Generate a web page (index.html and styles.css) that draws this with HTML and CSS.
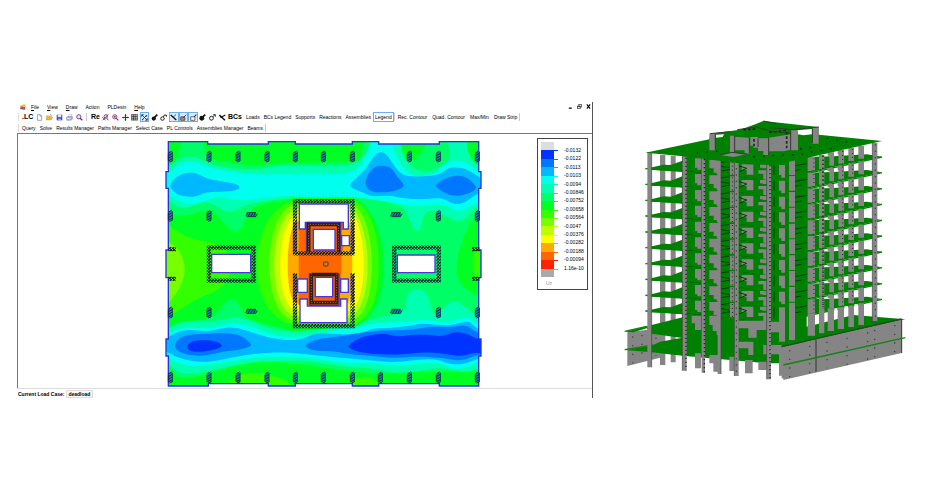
FILE: index.html
```html
<!DOCTYPE html>
<html lang="en">
<head>
<meta charset="utf-8">
<title>PLDesin</title>
<link rel="stylesheet" href="styles.css">
</head>
<body>
<main class="page">
<section class="app">
  <header class="menubar">
    <svg class="appicon" viewBox="0 0 16 16"><rect x="1" y="4" width="8" height="8" fill="#e8862a"/><rect x="7" y="1" width="8" height="7" fill="#f6c342"/><rect x="6" y="8" width="8" height="7" fill="#d64a2a"/><rect x="1" y="9" width="6" height="5" fill="#3b62c4"/></svg>
    <nav class="menu">
      <button><u>F</u>ile</button><button><u>V</u>iew</button><button><u>D</u>raw</button><button>Action</button><button>PLDesin</button><button><u>H</u>elp</button>
    </nav>
    <div class="winctl">
      <button aria-label="Minimize"><svg viewBox="0 0 12 12"><path d="M2 10H9" stroke="#000" stroke-width="3"/></svg></button>
      <button aria-label="Restore"><svg viewBox="0 0 12 12"><path d="M4 4V1H11V7H8M1 5H8V11H1ZM1 6H8" fill="none" stroke="#111" stroke-width="1.6"/></svg></button>
      <button aria-label="Close"><svg viewBox="0 0 12 12"><path d="M2 1L10 11M10 1L2 11" stroke="#000" stroke-width="2.6"/></svg></button>
    </div>
  </header>

  <div class="toolbar">
    <i class="grip"></i>
    <button class="word lc">.LC</button>
    <div class="icons files">
      <button aria-label="New"><svg viewBox="0 0 20 20"><path d="M4 2H12L16 6V18H4Z" fill="#fff" stroke="#6b83b5" stroke-width="2"/><path d="M12 2V6H16" fill="none" stroke="#6b83b5" stroke-width="2"/></svg></button>
      <button aria-label="Open"><svg viewBox="0 0 20 20"><path d="M1 17V5H7L9 7H15V10" fill="#f7cf5b" stroke="#c9962c" stroke-width="1.5"/><path d="M1 17L5 9H19L15 17Z" fill="#f0b93a" stroke="#b98420"/><path d="M11 3Q15 0 17 5" fill="none" stroke="#4a72b8" stroke-width="2"/></svg></button>
      <button aria-label="Save"><svg viewBox="0 0 20 20"><path d="M2 2H18V18H2Z" fill="#3b46c8"/><path d="M5 2H15V9H5Z" fill="#e9edff"/><path d="M6 13H14V18H6Z" fill="#aab4ef"/></svg></button>
      <button aria-label="Print"><svg viewBox="0 0 20 20"><path d="M6 9L9 1H17L14 9Z" fill="#fff" stroke="#7087b4"/><path d="M1 10L5 7H18L19 14L14 18H2Z" fill="#9fb2d6" stroke="#566c9c"/><path d="M3 13H14" stroke="#fff" stroke-width="2"/></svg></button>
      <button aria-label="Preview"><svg viewBox="0 0 20 20"><circle cx="8" cy="8" r="6" fill="#f3e6f5" stroke="#7a2d84" stroke-width="2.6"/><path d="M12 12L18 18" stroke="#7a2d84" stroke-width="4"/></svg></button>
    </div>
    <i class="sep"></i>
    <button class="word re">Re</button>
    <div class="icons views">
      <button aria-label="Zoom window"><svg viewBox="0 0 20 20"><circle cx="11" cy="7" r="5" fill="none" stroke="#71305e" stroke-width="2.5"/><path d="M2 18L18 1M14 12L18 18M1 9L10 18" stroke="#71305e" stroke-width="2.5"/></svg></button>
      <button aria-label="Zoom in"><svg viewBox="0 0 20 20"><circle cx="8" cy="8" r="6" fill="none" stroke="#8b2f7b" stroke-width="2.6"/><path d="M12 12L18 18M5 8H11M8 5V11" stroke="#8b2f7b" stroke-width="3"/></svg></button>
      <button aria-label="Pan"><svg viewBox="0 0 20 20"><path d="M10 2V18M2 10H18" stroke="#222" stroke-width="2.5"/><path d="M10 0L13 4H7ZM10 20L13 16H7ZM0 10L4 7V13ZM20 10L16 7V13Z" fill="#222"/></svg></button>
      <button aria-label="Grid"><svg viewBox="0 0 20 20"><path d="M1 2H19M1 7H19M1 12H19M1 17H19M2 1V18M7 1V18M12 1V18M18 1V18" stroke="#222" stroke-width="2"/></svg></button>
      <button class="on" aria-label="Snap"><svg viewBox="0 0 20 20"><path d="M3 3L17 17M17 3L3 17M2 2H8M2 2V8M18 18H12M18 18V12M12 6H18M5 14V18" stroke="#222" stroke-width="2.2"/></svg></button>
      <button aria-label="Fill node"><svg viewBox="0 0 20 20"><circle cx="8" cy="13" r="6" fill="#111"/><path d="M10 10L18 2" stroke="#111" stroke-width="5"/></svg></button>
      <button aria-label="Open node"><svg viewBox="0 0 20 20"><circle cx="7" cy="13" r="5" fill="none" stroke="#111" stroke-width="2.6"/><path d="M10 8L12 3H18M18 3V8" fill="none" stroke="#111" stroke-width="2.6"/></svg></button>
      <button class="on" aria-label="Line"><svg viewBox="0 0 20 20"><path d="M2 3L18 17" stroke="#111" stroke-width="4"/><path d="M9 9L17 2" stroke="#111" stroke-width="2"/></svg></button>
      <button class="on" aria-label="Hatch area"><svg viewBox="0 0 20 20"><path d="M2 8H14V18H2Z" fill="#9a9a9a" stroke="#333" stroke-width="2"/><path d="M8 12L18 2" stroke="#333" stroke-width="2.6"/></svg></button>
      <button class="on" aria-label="Area"><svg viewBox="0 0 20 20"><path d="M2 8H14V18H2Z" fill="#fff" stroke="#333" stroke-width="2"/><path d="M12 8L18 2" stroke="#333" stroke-width="3"/></svg></button>
      <button aria-label="Solid load"><svg viewBox="0 0 20 20"><circle cx="8" cy="12" r="7" fill="#111"/><path d="M11 8L18 2" stroke="#111" stroke-width="5"/></svg></button>
      <button aria-label="Open load"><svg viewBox="0 0 20 20"><circle cx="7" cy="12" r="5.5" fill="none" stroke="#111" stroke-width="2.6"/><path d="M11 8L17 2M12 2H18V8" fill="none" stroke="#111" stroke-width="2.4"/></svg></button>
      <button aria-label="Strip"><svg viewBox="0 0 20 20"><path d="M1 3L17 18" stroke="#111" stroke-width="4"/><path d="M5 10L18 3M3 8L10 9" stroke="#111" stroke-width="3.4"/></svg></button>
    </div>
    <button class="word">BCs</button>
    <div class="texts">
      <button>Loads</button><button>BCs Legend</button><button>Supports</button><button>Reactions</button><button>Assemblies</button><button class="on">Legend</button>
    </div>
    <i class="sep"></i>
    <div class="texts wide">
      <button>Rec. Contour</button><button>Quad. Contour</button><button>Max/Min</button><button>Draw Strip</button>
    </div>
    <i class="sep"></i>
  </div>

  <div class="toolbar second">
    <i class="grip"></i>
    <div class="texts">
      <button>Query</button><button>Solve</button><button>Results Manager</button><button>Paths Manager</button><button>Select Case</button><button>PL Controls</button><button>Assemblies Manager</button><button>Beams</button>
    </div>
    <i class="sep"></i>
  </div>

  <div class="canvas">
    <svg class="plot" viewBox="-426 -3 1557 762" role="img" aria-label="Slab displacement contours">
      <defs>
        <path id="slab" d="M25 20H143V27H325V20H406V27H577V20H656V27H838V20H956V110H963V160H956V345H963V428H956V612H963V663H956V753H838V746H656V753H577V746H406V753H325V746H145V753H25V663H18V612H25V428H18V345H25V160H18V110H25Z"/>
        <clipPath id="slabclip"><use href="#slab"/></clipPath>
        <pattern id="hatch" width="9" height="9" patternUnits="userSpaceOnUse"><path d="M-2 11L11-2" stroke="#06141c" stroke-width="4.4"/></pattern>
        <g id="colv"><path d="M-4-14H4V14H-4Z" fill="#1583b8"/><path d="M-6-10L4-16M-6-2L6-9M-6 6L6-1M-6 14L6 7M-3 17L6 14M-6-8V14M6-14V14" stroke="#102038" stroke-width="2.6"/></g>
        <g id="colh"><path d="M-15-4H15V4H-15Z" fill="#1583b8"/><path d="M-17 5L-11-5M-10 6L-3-6M-2 6L5-6M6 6L12-6M14 5L18-3M-14-6H14M-14 6H14" stroke="#102038" stroke-width="2.6"/></g>
        <g id="colrow"><use href="#colv" x="31"/><use href="#colv" x="147"/><use href="#colv" x="234"/><use href="#colv" x="321"/><use href="#colv" x="406"/><use href="#colv" x="490"/><use href="#colv" x="577"/><use href="#colv" x="748"/><use href="#colv" x="835"/><use href="#colv" x="952"/></g>
        <g id="colmid"><use href="#colv" x="31"/><use href="#colv" x="147"/><use href="#colh" x="274" y="-3"/><use href="#colh" x="708" y="-3"/><use href="#colv" x="835"/><use href="#colv" x="952"/></g>
        <path id="supports" d="M147 338H281V437H147ZM703 338H836V437H703ZM400 199H583M400 355H583M400 573H583M405 195V359M578 195V359M405 415V580M578 415V580"/>
      </defs>
      <g clip-path="url(#slabclip)">
        <use href="#slab" fill="#00ff22"/>
        <path fill="#33ff00" d="M25 268C60 300 90 312 140 320S210 340 212 390S180 465 140 480S70 520 25 545Z"/>
        <path fill="#77ff00" d="M15 318C55 330 75 370 74 405S55 470 25 505H15Z"/>
        <path fill="#00ff66" d="M25 105C50 75 62 50 65 15H130C135 50 145 75 175 78S260 95 320 88S430 85 510 82S590 90 602 60L612 15H960V230C925 265 895 330 890 390S920 460 960 490V690C880 725 800 705 740 712S600 715 510 700S370 680 300 682S170 715 100 725S50 710 25 695V580C60 550 120 560 150 548S190 495 215 493S245 540 265 550S360 580 410 590C560 590 670 520 670 390S610 220 580 190H400C340 200 290 205 270 230S250 290 226 290S180 235 150 228S60 260 25 232Z"/>
        <path fill="#00ff22" d="M728 15C722 50 728 80 750 78S790 50 805 15ZM925 15C918 50 930 80 960 92V15Z"/>
        <path fill="#33ff00" d="M963 315C935 345 925 410 963 450ZM200 753C215 715 290 705 330 720S380 730 395 753ZM560 753C585 720 640 715 660 753Z"/>
        <path fill="#00ffb0" d="M15 100C50 80 60 66 90 65S130 80 160 90S270 108 320 98S440 95 510 94S590 85 610 65S625 40 630 15H722C722 50 735 85 770 103S830 100 855 85S862 45 866 15H920C920 50 930 80 965 100V208C930 225 920 258 895 258S840 225 810 228S790 288 773 288S745 225 720 213S640 195 580 188L400 190C340 195 270 200 235 222S180 215 150 205S90 222 70 220S40 205 15 192Z"/>
        <path fill="#00ffb0" d="M737 525C737 480 745 462 772 462S808 490 815 540Z"/>
        <path fill="#00ffee" d="M15 120C50 100 60 80 90 80S130 92 160 100S270 120 330 118H530C590 115 600 95 612 70L636 15H695C700 60 725 90 745 112S820 125 840 100S880 75 900 77S935 95 965 118V198C940 205 915 230 895 228S860 205 830 208S760 215 700 203S580 182 510 185S400 180 340 185S270 198 230 194S180 182 150 192S110 210 85 206S40 190 15 170Z"/>
        <path fill="#00b8ff" d="M30 152C40 125 70 112 95 113S130 130 165 136S238 145 238 157S200 170 160 171S120 186 92 185S40 178 30 152ZM570 150C585 130 610 115 625 90S650 52 663 52S685 65 698 85S725 123 750 124S830 125 850 110S880 98 897 98S935 110 963 130V172C940 180 920 207 893 207S860 188 830 190S750 195 710 186S640 190 620 178S575 165 570 150Z"/>
        <path fill="#0077ff" d="M617 140C620 115 640 92 663 92S695 98 705 115S728 140 731 150S700 172 663 172S617 160 617 140ZM827 152C840 135 870 122 895 122S935 138 946 152S915 182 890 182S840 168 827 152Z"/>
        <path fill="#00ffb0" d="M15 590C50 560 80 558 110 560S160 560 210 550S300 575 340 583S450 590 510 580S620 560 650 550S720 545 733 525S742 464 772 462S808 500 815 525S850 520 860 510S880 500 890 500S930 530 963 550V700C900 725 870 695 830 700S740 720 680 708S570 700 510 688S370 675 300 680S170 705 110 714S45 705 15 675Z"/>
        <path fill="#00ffee" d="M15 600C50 580 80 572 110 578S160 574 210 566S300 590 340 600S450 605 510 590S620 568 660 565S750 560 780 555S850 568 895 553S930 560 963 572V678C920 700 890 710 850 690S740 700 680 690S570 690 510 678S400 665 330 666S220 680 170 686S110 698 90 694S40 680 15 665Z"/>
        <path fill="#00b8ff" d="M15 615C50 585 85 582 120 587S160 582 200 578S290 600 340 610S420 615 450 602S510 600 570 597S620 580 660 580S740 575 775 568S850 580 895 565S930 572 963 585V668C920 682 900 698 850 680S740 685 680 680S570 670 510 665S400 650 330 653S210 670 160 678S60 675 15 648Z"/>
        <path fill="#0077ff" d="M45 633C50 600 90 598 125 597S190 592 220 597S265 618 272 627S240 645 210 647S150 662 120 662S48 655 45 633ZM438 632C450 612 490 610 530 605S600 593 650 588S730 590 780 580S860 580 895 573S930 585 963 597V658C930 665 915 680 885 675S790 662 740 667S640 662 600 660S530 648 500 648S440 645 438 632Z"/>
        <path fill="#0033ff" d="M82 635C85 618 110 615 140 616S180 625 185 630S165 645 148 647S85 658 82 635ZM565 635C580 615 610 602 650 598S700 608 730 603S800 598 830 602S870 590 895 592S935 605 963 615V655C930 650 920 665 890 662S830 650 780 653S720 660 670 658S580 650 565 635Z"/>
        <path fill="#00ff22" d="M400 188C340 205 300 300 295 390S340 565 400 578L580 580C650 545 672 480 672 390S640 215 580 188Z"/>
        <path fill="#33ff00" d="M400 198C330 215 290 300 290 390S330 555 400 570H580C640 545 656 480 656 390S635 220 580 195Z"/>
        <path fill="#77ff00" d="M405 205C350 225 328 310 328 390S350 545 405 560H575C620 535 635 480 635 390S615 230 575 205Z"/>
        <path fill="#bbff00" d="M405 220C360 245 343 320 343 390S360 530 405 545H575C610 520 623 460 623 390S605 245 575 220Z"/>
        <path fill="#ffff00" d="M405 237C372 265 360 330 360 390S372 510 405 528H575C602 500 611 450 611 390S600 260 575 230Z"/>
        <path fill="#ffaa00" d="M405 258C390 285 383 340 383 390S390 490 405 505H565C574 470 577 430 577 390S574 290 568 262Z"/>
        <path fill="#ff6600" d="M416 262V510H542C536 465 546 440 544 390S560 340 545 300V262Z"/>
      </g>
      <path d="M440 355V262H550V285H541V355Z" fill="#ff5a00"/>
      <path d="M448 415H537V512H448Z" fill="#ff5a00"/>
      <g fill="none" stroke="#8a62a8" stroke-width="9"><path d="M405 262V352M578 262V352M405 420V500M578 420V500"/></g>
      <g fill="none" stroke="#18b88a" stroke-width="4"><path d="M147 338H281V437H147ZM703 338H836V437H703ZM400 199H583M400 355H583M400 573H583M405 195V250M578 195V250M405 520V580M578 520V580"/></g>
      <use href="#supports" fill="none" stroke="url(#hatch)" stroke-width="13"/>
      <g fill="#fff" stroke="#4a35d8" stroke-width="4">
        <path d="M155 358H272V413H155ZM712 360H825V413H712ZM418 207H565V282H550V262H436V282H418ZM460 283H525V345H460ZM545 302H568V332H545ZM413 432H442V472H413ZM466 427H518V485H466ZM542 432H565V472H542ZM420 492H442V513H542V492H561V563H420Z"/>
        <use href="#slab" fill="none" stroke="#2432e0"/>
      </g>
      <g fill="none" stroke="#2b2018" stroke-width="11"><path d="M446 352V268H536V352"/><path d="M454 415V503H530V415M454 419H535"/></g>
      <g fill="none" stroke="#3d2ba0" stroke-width="3"><path d="M439 352V262H542V352M448 415V511H537V415"/></g>
      <g fill="none" stroke="#ff9a52" stroke-width="2" stroke-dasharray="3 5"><path d="M446 352V268H536V352M454 415V503H530V415"/></g>
      <path d="M491 381H504V393H491Z" fill="#d87828" stroke="#554433" stroke-width="3"/>
      <use href="#colrow" y="64"/><use href="#colmid" y="242"/><use href="#colmid" y="532"/><use href="#colrow" y="727"/><use href="#colv" x="661" y="727"/>
      <path d="M25 343H48M25 431H48M936 343H958M936 431H958" stroke="url(#hatch)" stroke-width="12"/>
      <path d="M25 338H48V348H25ZM25 426H48V436H25ZM936 338H958V348H936ZM936 426H958V436H936Z" fill="url(#hatch)"/>
    </svg>
    <aside class="legend">
      <ul class="scale"><li></li><li></li><li></li><li></li><li></li><li></li><li></li><li></li><li></li><li></li><li></li><li></li><li></li><li></li><li></li><li></li></ul>
      <ul class="values"><li>-0.0132</li><li>-0.0122</li><li>-0.0113</li><li>-0.0103</li><li>-0.0094</li><li>-0.00846</li><li>-0.00752</li><li>-0.00658</li><li>-0.00564</li><li>-0.0047</li><li>-0.00376</li><li>-0.00282</li><li>-0.00188</li><li>-0.00094</li><li>1.16e-10</li></ul>
      <p class="unit">Uz</p>
    </aside>
  </div>

  <footer class="status"><label for="case">Current Load Case:</label><input id="case" value="deadload" readonly></footer>
</section>

<svg class="building" viewBox="0 0 870 810" role="img" aria-label="3D model of the building">
  <defs>
    <g id="storey">
      <path fill="#008000" d="M76 160L100 156L130 149L152 150L187 137V169L95 165ZM786 125L740 118L640 124L555 126V176L650 154Z"/>
      <path fill="#858585" d="M225 130H243V164H232V158H225ZM268 134H303V185H290V173H281V160H268ZM330 137H343V180H330ZM365 148H400V179H380V165H365ZM415 166H440V195H430V176H415ZM420 148H440V160H428V158H420ZM477 150H495V188H484V180H477ZM507 136H525V180H507ZM563 126H585V166H575V168H563ZM597 120H613V162H597ZM623 112H642V152H628V122H623ZM653 105H672V146H655V118H653ZM685 98H702V138H685ZM715 92H732V131H715Z"/>
      <path fill="none" stroke="#013c01" stroke-width="3" d="M303 142L328 138M303 154L328 158M305 168L330 163M355 152L380 160L358 170M462 150V180M526 152L560 146M526 166L545 163M200 169L245 174M304 181L330 184M355 186L415 194"/>
      <path fill="none" stroke="#008000" stroke-width="4" d="M76 161L187 169L300 181L440 196L500 190L560 176L786 126"/>
      <path fill="none" stroke="#222" stroke-width="3" stroke-dasharray="3 9" d="M198 130V170M253 134V174M337 140V180M582 130V165M609 122V160M668 108V146M698 102V138"/>
    </g>
  </defs>
  <path fill="#858585" d="M22 652L120 640V728L22 753Z"/>
  <path fill="#858585" d="M120 120H136V750H120ZM152 122H167V742H152Z"/>
  <path fill="#008000" d="M187 120H560V690L485 700V745H440L187 722ZM14 650L215 600V672L187 669L95 656L80 640L40 652ZM14 705L95 692L120 680L187 668V722L95 712ZM485 697L560 635L700 600L856 613Z"/>
  <path fill="#858585" d="M225 715H243V760H225ZM268 720H303V770H280V745H268ZM328 725H343V768H328ZM375 735H398V775H375ZM415 740H440V765H415ZM430 690H485V718H430ZM477 710H495V790H485V782H477Z"/>
  <use href="#storey"/><use href="#storey" y="47"/><use href="#storey" y="95"/><use href="#storey" y="142"/><use href="#storey" y="190"/><use href="#storey" y="237"/><use href="#storey" y="285"/><use href="#storey" y="332"/><use href="#storey" y="380"/><use href="#storey" y="427"/>
  <path fill="#858585" d="M215 602H243V645H225V625H215ZM268 602H303V660H290V648H278V630H268ZM355 617H440V645H410V668H385V640H355ZM355 680H400V720H385V700H355ZM477 600H495V680H477ZM452 620H477V652H452ZM507 590H525V675H507ZM563 595H585V662H563ZM597 585H613V655H597ZM623 580H642V648H623ZM653 577H672V642H653ZM685 572H702V636H685ZM715 565H732V630H715Z"/>
  <path fill="#fff" d="M643 580H652V600H643ZM673 574H684V602H673ZM703 568H714V600H703Z"/>
  <path fill="#858585" d="M485 697L845 614V714L490 795Z"/>
  <path fill="none" stroke="#234a23" stroke-width="4" d="M485 695L845 612"/>
  <path fill="none" stroke="#333" stroke-width="3" d="M588 673V770M845 614V714"/>
  <path fill="none" stroke="#118411" stroke-width="4" d="M490 750L856 668M14 704L100 690M14 649L80 634"/>
  <path fill="none" stroke="#444" stroke-width="4" stroke-dasharray="4 22" d="M509 705V790M569 692V775M621 680V760M681 668V750M743 652V738M764 645V732M824 630V718M38 664V745M66 660V738M108 668V722"/>
  <path fill="#858585" d="M82 112H95V757H82ZM187 124H200V767H187ZM245 128H255V773H245ZM293 132H303V777H293ZM343 138H356V783H343ZM440 146H453V793H440ZM757 84H772V618H757Z"/>
  <path fill="none" stroke="#444" stroke-width="2" d="M95 112V757M187 124V767M303 135V777M343 138V783M440 146V793M757 84V618"/>
  <path fill="none" stroke="#222" stroke-width="4" stroke-dasharray="4 8" d="M198 128V766M253 132V772M450 150V792M609 122V580"/>
  <path fill="none" stroke="#333" stroke-width="3" stroke-dasharray="4 15" d="M349 140V780M766 88V616"/>
  <path fill="#008000" d="M76 113L268 73L272 56L360 44L400 30L430 18L596 36V59L786 78L560 129L460 150L380 148L190 124Z"/>
  <path fill="#fff" d="M288 59L312 58L308 66L288 68ZM530 46L576 42V58L550 61L530 57Z"/>
  <path fill="#858585" d="M268 56H286V106H268ZM330 62H344V112H330ZM344 65L388 68V116L374 114V106H344ZM391 66H414V98H400V92H391ZM414 70H446V120H430V108H414ZM446 68L512 58V104L490 109L446 108ZM512 46H534V106H512ZM577 36H596V86H577ZM300 120L335 112L380 118L340 126Z"/>
  <path fill="none" stroke="#303c30" stroke-width="3" d="M286 58V106M344 62V112M388 68V114M414 70V96M446 68V120M512 46V106M577 40V84M596 36L520 44L450 38M430 18L470 26M352 44L410 36L450 48L512 56M270 56L330 50M300 120L336 112L380 118"/>
  <path fill="none" stroke="#222" stroke-width="5" stroke-dasharray="8 6" d="M370 44L410 42M448 52L500 46M500 50V104M402 72V94"/>
  <path fill="none" stroke="#063006" stroke-width="4" stroke-dasharray="5 24" d="M230 114L300 108M400 125L540 118L640 100M540 102L600 94M620 70L700 84"/>
</svg>
</main>
</body>
</html>
```
FILE: styles.css
```css
* { box-sizing: border-box; }
body { margin: 0; background: #fff; color: #000; font: 5px/8px "Liberation Sans", Arial, sans-serif; }
button, input { font: inherit; color: inherit; border: 0; padding: 0; margin: 0; background: none; white-space: nowrap; }
svg { display: block; }
ul, p { margin: 0; padding: 0; list-style: none; }

.page { display: grid; grid-template-columns: 576fr 290fr; gap: 27px; align-items: start; padding: 102px 30px 0 17px; }
.app { border-right: 1px solid #555; min-width: 0; }

.menubar { display: flex; align-items: center; height: 9px; padding: 0 1px 0 3px; }
.appicon { width: 6px; height: 6px; margin-right: 5px; }
.menu { display: flex; gap: 8px; }
.winctl { display: flex; gap: 4px; margin-left: auto; }
.winctl svg { width: 5px; height: 5px; }

.toolbar { display: flex; align-items: center; height: 12px; }
.second { height: 10px; }
.grip { width: 1px; height: 8px; margin: 0 3px 0 1px; background: #ddd; }
.sep { width: 1px; height: 8px; margin: 0 3px 0 2px; background: #ccc; }
.word { font-weight: bold; font-size: 7px; }
.lc { width: 13px; text-align: left; }
.re { width: 11px; }
.icons { display: flex; }
.icons button { flex: 1; height: 10px; display: grid; place-items: center; border: 1px solid transparent; }
.icons svg { width: 7px; height: 7px; }
.files { width: 49px; }
.views { width: 126px; margin-right: 1px; }
.texts { display: flex; gap: 4px; }
.wide { gap: 5px; }
.word + .texts { margin-left: 4px; }
.icons .on, .texts .on { border: 1px solid #6aaef0; background: #dcecfb; }
.texts .on { background: #fff; padding: 0 1px; margin: 0 -2px; height: 10px; }

.canvas { display: flex; align-items: flex-start; border: solid #777; border-width: 1px 0 0 1px; padding-right: 4px; }
.plot { flex: 1; min-width: 0; }
.legend { width: 51px; height: 152px; margin-top: 4px; padding: 3px 3px 0; border: 1px solid #444; display: grid; grid-template-columns: 13px 1fr; column-gap: 10px; align-content: start; }
.scale { display: flex; flex-direction: column; height: 135px; }
.scale li { flex: 1; position: relative; }
.scale li:not(:first-child)::after { content: ""; position: absolute; left: 0; top: 0; width: 17px; height: 1px; background: inherit; }
.scale li:nth-child(1) { background: #ddd; }
.scale li:nth-child(2) { background: #03f; }
.scale li:nth-child(3) { background: #07f; }
.scale li:nth-child(4) { background: #00b8ff; }
.scale li:nth-child(5) { background: #0fe; }
.scale li:nth-child(6) { background: #00ffb0; }
.scale li:nth-child(7) { background: #0f6; }
.scale li:nth-child(8) { background: #0f2; }
.scale li:nth-child(9) { background: #3f0; }
.scale li:nth-child(10) { background: #7f0; }
.scale li:nth-child(11) { background: #bf0; }
.scale li:nth-child(12) { background: #ff0; }
.scale li:nth-child(13) { background: #fa0; }
.scale li:nth-child(14) { background: #f60; }
.scale li:nth-child(15) { background: #f20; }
.scale li:nth-child(16) { background: #aaa; }
.values { display: flex; flex-direction: column; height: 126px; margin-top: 4px; }
.values li { flex: 1; white-space: nowrap; }
.unit { padding: 2px 0 0 5px; color: #999; }

.status { display: flex; align-items: center; gap: 2px; height: 10px; padding-left: 1px; border-top: 1px solid #ddd; font-weight: bold; }
.status input { width: 27px; height: 8px; padding: 0 1px; border: 1px solid #ddd; background: #f8f8f8; }

.building { width: 100%; margin-top: 13px; }
```
